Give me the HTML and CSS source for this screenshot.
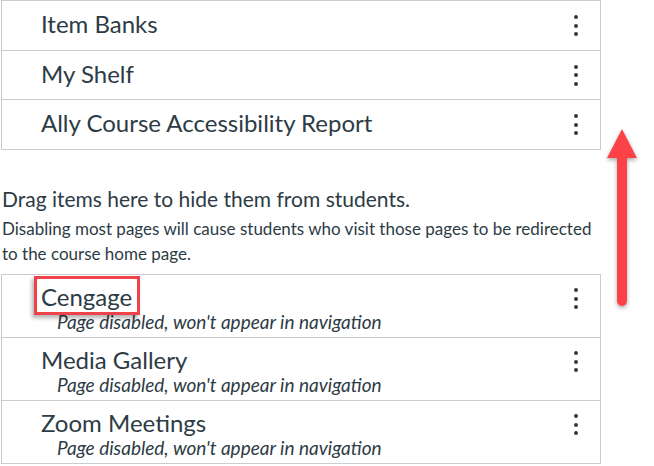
FILE: index.html
```html
<!DOCTYPE html>
<html>
<head>
<meta charset="utf-8">
<link rel="stylesheet" href="styles.css">
</head>
<body>
<div class="page">
  <ul class="nav-list enabled">
    <li class="row"><span class="title">Item Banks</span><span class="kebab"><i></i><i></i><i></i></span></li>
    <li class="row short"><span class="title">My Shelf</span><span class="kebab"><i></i><i></i><i></i></span></li>
    <li class="row"><span class="title">Ally Course Accessibility Report</span><span class="kebab"><i></i><i></i><i></i></span></li>
  </ul>

  <div class="hint">
    <p class="hint-head">Drag items here to hide them from students.</p>
    <p class="hint-body">Disabling most pages will cause students who visit those pages to be redirected to the course home page.</p>
  </div>

  <ul class="nav-list disabled">
    <li class="row2">
      <div class="line"><span class="title2 marked">Cengage</span><span class="kebab"><i></i><i></i><i></i></span></div>
      <div class="sub">Page disabled, won't appear in navigation</div>
    </li>
    <li class="row2">
      <div class="line"><span class="title2">Media Gallery</span><span class="kebab"><i></i><i></i><i></i></span></div>
      <div class="sub">Page disabled, won't appear in navigation</div>
    </li>
    <li class="row2">
      <div class="line"><span class="title2">Zoom Meetings</span><span class="kebab"><i></i><i></i><i></i></span></div>
      <div class="sub">Page disabled, won't appear in navigation</div>
    </li>
  </ul>

  <svg class="arrow" width="40" height="188" viewBox="0 0 40 188">
    <defs>
      <filter id="sh" x="-50%" y="-20%" width="200%" height="140%">
        <feDropShadow dx="0" dy="2" stdDeviation="2" flood-color="#000" flood-opacity="0.35"/>
      </filter>
    </defs>
    <g filter="url(#sh)">
      <path d="M20 4 L35 33 L5 33 Z" fill="#fb4346"/>
      <path d="M15 32 H25 V176 A5 5 0 0 1 15 176 Z" fill="#fb4346"/>
    </g>
  </svg>
</div>
</body>
</html>
```

FILE: styles.css
```css
* { box-sizing: border-box; }
html, body { margin: 0; padding: 0; background: #fff; }
body {
  font-family: Lato, "Open Sans", "Liberation Sans", sans-serif;
  color: #2d3b45;
}
.page {
  position: relative;
  width: 654px;
  height: 466px;
  overflow: hidden;
}
.nav-list {
  list-style: none;
  margin: 0 0 0 1px;
  padding: 0;
  width: 600px;
  border: 1px solid #c7cdd1;
  border-bottom: none;
}
.row {
  display: flex;
  align-items: center;
  height: 50px;
  padding: 0 21px 0 39px;
  border-bottom: 1px solid #c7cdd1;
}
.row.short { height: 49px; }
.title {
  flex: 1;
  font-size: 24px;
  padding-bottom: 4px;
}
.kebab {
  display: flex;
  flex-direction: column;
  align-items: center;
  gap: 4.5px;
  width: 6px;
}
.kebab i {
  display: block;
  width: 4px;
  height: 4px;
  border-radius: 50%;
  background: #2d3b45;
}
.hint {
  padding: 36px 0 0 2px;
}
.hint p { margin: 0; }
.hint-head {
  font-size: 21px;
  line-height: 26px;
}
.hint-body {
  font-size: 17px;
  line-height: 25px;
  width: 595px;
  padding-top: 4px;
}
.disabled {
  margin-top: 8px;
}
.row2 {
  height: 63px;
  padding: 8px 21px 0 39px;
  border-bottom: 1px solid #c7cdd1;
}
.line {
  display: flex;
  align-items: center;
  height: 28px;
}
.line .kebab { margin-top: 3px; }
.title2 {
  font-size: 24px;
  line-height: 28px;
}
.line .title2 + .kebab { margin-left: auto; }
.sub {
  font-style: italic;
  font-size: 19px;
  line-height: 22px;
  padding-left: 16px;
}
.marked { position: relative; }
.marked::after {
  content: "";
  position: absolute;
  left: -7px;
  right: -8px;
  top: -7px;
  bottom: -4px;
  border: 3px solid #ee434a;
  box-shadow: -2px 3px 4px rgba(0,0,0,0.3);
}
.arrow {
  position: absolute;
  left: 602px;
  top: 125px;
}
```
